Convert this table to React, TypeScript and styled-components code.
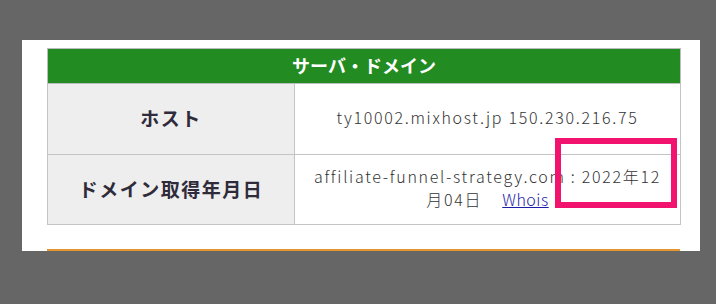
import styled, { createGlobalStyle } from 'styled-components'

const Global = createGlobalStyle`
  html, body {
    margin: 0;
    padding: 0;
    background: #666666;
  }
  body {
    font-family: "Noto Sans CJK JP", "Liberation Sans", sans-serif;
  }
`

const Sheet = styled.div`
  margin: 40px 0 0 22px;
  width: 678px;
  height: 211px;
  background: #ffffff;
  padding: 8px 20px 0 25px;
  box-sizing: border-box;
  overflow: hidden;
  position: relative;
`

const InfoTable = styled.table`
  width: 633px;
  border-collapse: collapse;
  border: 1px solid #bdbdbd;
  table-layout: fixed;
`

const Col = styled.col<{ $w: number }>`
  width: ${p => p.$w}px;
`

const HeadCell = styled.th`
  background: #228b22;
  color: #ffffff;
  font-size: 18px;
  font-weight: 700;
  height: 35px;
  padding: 0 0 2px;
  text-align: center;
  border: 1px solid #bdbdbd;
  box-sizing: border-box;
`

const LabelCell = styled.th`
  background: #eeeeee;
  color: #2f2b3a;
  font-size: 19px;
  font-weight: 700;
  letter-spacing: 1.5px;
  text-align: center;
  border: 1px solid #c4c4c4;
  padding: 0 0 3px;
`

const ValueCell = styled.td<{ $tall?: boolean }>`
  height: ${p => (p.$tall ? 70 : 71)}px;
  color: #333333;
  font-size: 16px;
  font-weight: 300;
  letter-spacing: 1.7px;
  line-height: 23px;
  text-align: center;
  border: 1px solid #c4c4c4;
  padding: 0 12px 3px;
  box-sizing: border-box;
`

const WhoisLink = styled.a`
  color: #1c1ca8;
  text-decoration: underline;
  letter-spacing: 0.5px;
  margin-left: 20px;
`

const NextBar = styled.div`
  margin-top: 24px;
  width: 633px;
  height: 4px;
  background: #e3952f;
`

const Marker = styled.div`
  position: absolute;
  left: 533px;
  top: 98px;
  width: 122px;
  height: 70px;
  border: 6px solid #f2136e;
  box-sizing: border-box;
`

export default function App() {
  return (
    <>
      <Global />
      <Sheet>
        <InfoTable>
          <colgroup>
            <Col $w={247} />
            <Col $w={386} />
          </colgroup>
          <thead>
            <tr>
              <HeadCell colSpan={2}>サーバ・ドメイン</HeadCell>
            </tr>
          </thead>
          <tbody>
            <tr>
              <LabelCell>ホスト</LabelCell>
              <ValueCell>ty10002.mixhost.jp 150.230.216.75</ValueCell>
            </tr>
            <tr>
              <LabelCell>ドメイン取得年月日</LabelCell>
              <ValueCell $tall>
                affiliate-funnel-strategy.com : 2022年12月04日
                <WhoisLink href="#">Whois</WhoisLink>
              </ValueCell>
            </tr>
          </tbody>
        </InfoTable>
        <NextBar />
        <Marker />
      </Sheet>
    </>
  )
}
